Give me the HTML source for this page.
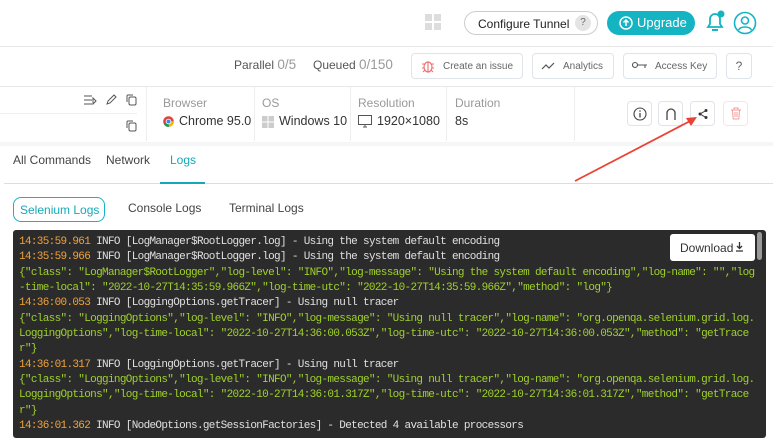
<!DOCTYPE html>
<html><head><meta charset="utf-8"><style>
*{box-sizing:border-box;margin:0;padding:0}
body{width:773px;height:438px;overflow:hidden;background:#fff;font-family:"Liberation Sans",sans-serif;position:relative;color:#333}
.a{position:absolute}
.btn{position:absolute;border:1px solid #dfe3ea;border-radius:4px;background:#fff;font-size:10px;color:#666;display:flex;align-items:center}
.ib{position:absolute;border:1px solid #dfe3ea;border-radius:4px;width:25px;height:25px;top:101px;display:flex;align-items:center;justify-content:center}
.lbl{font-size:12px;color:#999}
.val{font-size:12.5px;color:#333}
.log{position:absolute;left:13px;top:230px;width:753px;height:208px;background:#2b2b2b;border-radius:3px;overflow:hidden}
.log pre{position:absolute;left:6px;top:5px;font-family:"Liberation Mono",monospace;font-size:11px;letter-spacing:-0.67px;line-height:15.33px;color:#e0e0e0;white-space:pre}
.t{color:#f0a23a}.g{color:#9fd22a}
</style></head><body>
<div class="a" style="left:0;top:46px;width:773px;height:1px;background:#e8e8e8"></div>
<svg class="a" style="left:425px;top:14px" width="16" height="16"><rect x="0" y="0" width="7" height="7" fill="#ddd"/><rect x="9" y="0" width="7" height="7" fill="#ddd"/><rect x="0" y="9" width="7" height="7" fill="#ddd"/><rect x="9" y="9" width="7" height="7" fill="#ddd"/></svg>
<div class="a" style="left:464px;top:11px;width:134px;height:24px;border:1px solid #ccc;border-radius:12px;font-size:12px;color:#222;padding:5px 0 0 13px">Configure Tunnel<span style="position:absolute;left:110px;top:3px;width:16px;height:16px;border-radius:8px;background:#e4e4e4;font-size:10px;color:#666;text-align:center;line-height:16px">?</span></div>
<div class="a" style="left:607px;top:11px;width:88px;height:24px;background:#14b4c2;border-radius:12px;color:#fff;font-size:13px;padding:4px 0 0 30px">Upgrade</div>
<svg class="a" style="left:619px;top:16px" width="14" height="14"><circle cx="7" cy="7" r="6" fill="none" stroke="#fff" stroke-width="1.5"/><path d="M7 10V4M4.5 6.5L7 4l2.5 2.5" fill="none" stroke="#fff" stroke-width="1.5"/></svg>
<svg class="a" style="left:704px;top:10px" width="22" height="24"><path d="M4 17h14l-2-3V9a5 5 0 0 0-10 0v5z" fill="none" stroke="#14b4c2" stroke-width="1.8"/><path d="M8 20h6" stroke="#14b4c2" stroke-width="2"/><circle cx="17" cy="4" r="3.5" fill="#14b4c2"/></svg>
<svg class="a" style="left:733px;top:11px" width="24" height="24"><circle cx="12" cy="12" r="10.5" fill="none" stroke="#14b4c2" stroke-width="1.6"/><circle cx="12" cy="9.5" r="3.5" fill="none" stroke="#14b4c2" stroke-width="1.6"/><path d="M5.5 19c2-4 11-4 13 0" fill="none" stroke="#14b4c2" stroke-width="1.6"/></svg>
<div class="a" style="left:234px;top:57px;font-size:12px;color:#555">Parallel <span style="color:#999;font-size:13.5px">0/5</span></div>
<div class="a" style="left:313px;top:57px;font-size:12px;color:#555">Queued <span style="color:#999;font-size:13.5px">0/150</span></div>
<div class="btn" style="left:411px;top:53px;width:112px;height:26px;padding-left:31px">Create an issue</div>
<svg class="a" style="left:421px;top:58px" width="14" height="16"><ellipse cx="7" cy="9" rx="4" ry="5" fill="none" stroke="#f07070" stroke-width="1.2"/><path d="M1 6h3M10 6h3M1 10h2M11 10h2M2 14l2-2M12 14l-2-2M7 4v10" stroke="#f07070" stroke-width="1.1"/></svg>
<div class="btn" style="left:532px;top:53px;width:82px;height:26px;padding-left:30px">Analytics</div>
<svg class="a" style="left:541px;top:61px" width="14" height="10"><path d="M1 8l4-4 3 3 5-5" fill="none" stroke="#555" stroke-width="1.2"/></svg>
<div class="btn" style="left:623px;top:53px;width:94px;height:26px;padding-left:31px">Access Key</div>
<svg class="a" style="left:632px;top:61px" width="16" height="8"><circle cx="3" cy="4" r="2.5" fill="none" stroke="#555" stroke-width="1.1"/><path d="M5.5 4H15M13 4v3" stroke="#555" stroke-width="1.1"/></svg>
<div class="btn" style="left:726px;top:53px;width:26px;height:26px;justify-content:center;font-size:12px">?</div>
<div class="a" style="left:0;top:86px;width:773px;height:1px;background:#e8e8e8"></div>
<div class="a" style="left:0;top:113px;width:137px;height:1px;background:#eee"></div>
<svg class="a" style="left:83px;top:94px" width="14" height="12"><path d="M1 2h8M1 6h8M1 10h8M10 4v6l3-3z" stroke="#555" fill="none" stroke-width="1"/></svg>
<svg class="a" style="left:105px;top:94px" width="12" height="12"><path d="M2 10l1-3 6-6 2 2-6 6z" fill="none" stroke="#555"/></svg>
<svg class="a" style="left:126px;top:94px" width="11" height="12"><rect x="3" y="3" width="7" height="8" rx="1.5" fill="none" stroke="#555"/><path d="M1 8V2a1 1 0 0 1 1-1h5" fill="none" stroke="#555"/></svg>
<svg class="a" style="left:126px;top:120px" width="11" height="12"><rect x="3" y="3" width="7" height="8" rx="1.5" fill="none" stroke="#555"/><path d="M1 8V2a1 1 0 0 1 1-1h5" fill="none" stroke="#555"/></svg>
<div class="a" style="left:146px;top:87px;width:1px;height:54px;background:#eee"></div>
<div class="a" style="left:254px;top:87px;width:1px;height:54px;background:#eee"></div>
<div class="a" style="left:350px;top:87px;width:1px;height:54px;background:#eee"></div>
<div class="a" style="left:446px;top:87px;width:1px;height:54px;background:#eee"></div>
<div class="a" style="left:574px;top:87px;width:1px;height:54px;background:#eee"></div>
<div class="a lbl" style="left:163px;top:96px">Browser</div>
<div class="a lbl" style="left:262px;top:96px">OS</div>
<div class="a lbl" style="left:358px;top:96px">Resolution</div>
<div class="a lbl" style="left:455px;top:96px">Duration</div>
<svg class="a" style="left:163px;top:116px" width="11" height="11"><circle cx="5.5" cy="5.5" r="5.3" fill="#db4437"/><path d="M5.5 5.5L1 8.5A5.3 5.3 0 0 0 6 10.8z" fill="#0f9d58"/><path d="M5.5 5.5L10.8 5A5.3 5.3 0 0 1 6 10.8z" fill="#f4b400"/><circle cx="5.5" cy="5.5" r="2.4" fill="#4285f4" stroke="#fff" stroke-width="0.8"/></svg>
<div class="a val" style="left:179px;top:114px">Chrome 95.0</div>
<svg class="a" style="left:262px;top:116px" width="12" height="12"><rect x="0" y="0" width="5.5" height="5.5" fill="#ccc"/><rect x="6.5" y="0" width="5.5" height="5.5" fill="#ccc"/><rect x="0" y="6.5" width="5.5" height="5.5" fill="#ccc"/><rect x="6.5" y="6.5" width="5.5" height="5.5" fill="#ccc"/></svg>
<div class="a val" style="left:279px;top:114px">Windows 10</div>
<svg class="a" style="left:358px;top:115px" width="14" height="13"><rect x="0.5" y="0.5" width="13" height="9" fill="none" stroke="#555"/><path d="M5 12h4M7 10v2" stroke="#555"/></svg>
<div class="a val" style="left:377px;top:114px">1920×1080</div>
<div class="a val" style="left:455px;top:114px">8s</div>
<div class="ib" style="left:627px"><svg width="14" height="14"><circle cx="7" cy="7" r="6" fill="none" stroke="#444" stroke-width="1.1"/><path d="M7 6v4.5" stroke="#444" stroke-width="1.3"/><circle cx="7" cy="4" r="0.8" fill="#444"/></svg></div>
<div class="ib" style="left:658px"><svg width="12" height="14"><path d="M2 13V6a4 4 0 0 1 8 0v7" fill="none" stroke="#444" stroke-width="1.3"/></svg></div>
<div class="ib" style="left:690px"><svg width="12" height="12"><circle cx="9" cy="2.5" r="1.5" fill="#333"/><circle cx="9" cy="9.5" r="1.5" fill="#333"/><circle cx="3" cy="6" r="1.5" fill="#333"/><path d="M9 2.5L3 6l6 3.5" fill="none" stroke="#333"/></svg></div>
<div class="ib" style="left:723px;border-color:#fbe3e3"><svg width="12" height="13"><path d="M1 3h10M4 3V1h4v2M2.5 3.5l.7 8.5h5.6l.7-8.5M5 5v5M7 5v5" fill="none" stroke="#f59a9a"/></svg></div>
<div class="a" style="left:0;top:142px;width:773px;height:4px;background:#f5f6f8"></div>
<div class="a" style="left:13px;top:153px;font-size:12px;color:#444">All Commands</div>
<div class="a" style="left:106px;top:153px;font-size:12px;color:#444">Network</div>
<div class="a" style="left:170px;top:153px;font-size:12px;color:#14a9b8">Logs</div>
<div class="a" style="left:4px;top:183px;width:769px;height:1px;background:#ddd"></div>
<div class="a" style="left:160px;top:182px;width:45px;height:2px;background:#14a9b8"></div>
<svg class="a" style="left:570px;top:112px" width="135" height="75"><path d="M5 69L124 7" stroke="#ea4335" stroke-width="1.8"/><path d="M127 5l-11 1 5 8z" fill="#ea4335"/></svg>
<div class="a" style="left:13px;top:197px;width:92px;height:25px;border:1px solid #14b4c2;border-radius:8px;font-size:12px;color:#14a9b8;padding:5px 0 0 6px">Selenium Logs</div>
<div class="a" style="left:128px;top:201px;font-size:12px;color:#444">Console Logs</div>
<div class="a" style="left:229px;top:201px;font-size:12px;color:#444">Terminal Logs</div>
<div class="log"><pre><span class="t">14:35:59.961</span> INFO [LogManager$RootLogger.log] - Using the system default encoding
<span class="t">14:35:59.966</span> INFO [LogManager$RootLogger.log] - Using the system default encoding
<span class="g">{"class": "LogManager$RootLogger","log-level": "INFO","log-message": "Using the system default encoding","log-name": "","log
-time-local": "2022-10-27T14:35:59.966Z","log-time-utc": "2022-10-27T14:35:59.966Z","method": "log"}</span>
<span class="t">14:36:00.053</span> INFO [LoggingOptions.getTracer] - Using null tracer
<span class="g">{"class": "LoggingOptions","log-level": "INFO","log-message": "Using null tracer","log-name": "org.openqa.selenium.grid.log.
LoggingOptions","log-time-local": "2022-10-27T14:36:00.053Z","log-time-utc": "2022-10-27T14:36:00.053Z","method": "getTrace
r"}</span>
<span class="t">14:36:01.317</span> INFO [LoggingOptions.getTracer] - Using null tracer
<span class="g">{"class": "LoggingOptions","log-level": "INFO","log-message": "Using null tracer","log-name": "org.openqa.selenium.grid.log.
LoggingOptions","log-time-local": "2022-10-27T14:36:01.317Z","log-time-utc": "2022-10-27T14:36:01.317Z","method": "getTrace
r"}</span>
<span class="t">14:36:01.362</span> INFO [NodeOptions.getSessionFactories] - Detected 4 available processors</pre>
<div class="a" style="left:657px;top:4px;width:85px;height:27px;background:#fff;border-radius:3px;font-size:12px;color:#333;padding:7px 0 0 10px">Download</div>
<svg class="a" style="left:722px;top:12px" width="9" height="10"><path d="M4.5 0v6M2 4l2.5 2.5L7 4M1 9h7" fill="none" stroke="#333" stroke-width="1.3"/></svg>
<div class="a" style="left:744px;top:2px;width:5px;height:28px;background:#999;border-radius:3px"></div>
</div>
</body></html>
